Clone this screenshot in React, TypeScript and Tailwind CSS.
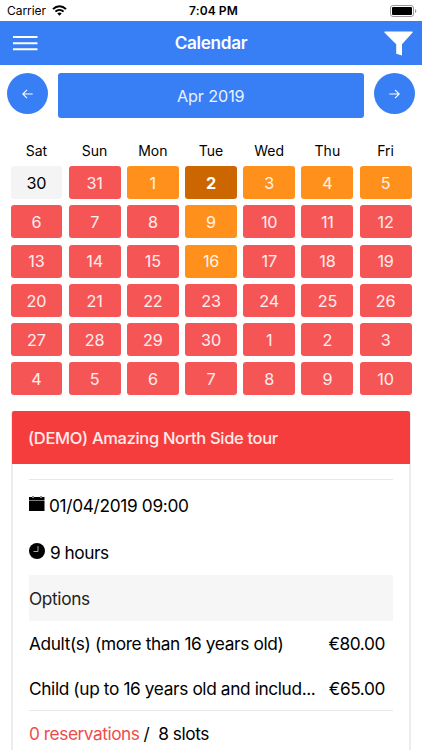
import React from 'react';

const weekdays = ['Sat', 'Sun', 'Mon', 'Tue', 'Wed', 'Thu', 'Fri'];

const days = [
  30, 31, 1, 2, 3, 4, 5,
  6, 7, 8, 9, 10, 11, 12,
  13, 14, 15, 16, 17, 18, 19,
  20, 21, 22, 23, 24, 25, 26,
  27, 28, 29, 30, 1, 2, 3,
  4, 5, 6, 7, 8, 9, 10,
];

const available = [2, 4, 5, 6, 10, 17];

function dayStyle(index: number) {
  if (index === 0) return 'bg-[#f4f4f4] text-black';
  if (index === 3) return 'bg-[#cc6600] text-white font-bold';
  if (available.includes(index)) return 'bg-[#ff901c] text-white/90';
  return 'bg-[#f65556] text-white/90';
}

function StatusBar() {
  return (
    <div className="grid h-[21px] grid-cols-3 items-center bg-white pr-[5px] pl-[7px]">
      <div className="flex items-center gap-[6px]">
        <span className="text-[12px] leading-[21px] tracking-[-0.05px]">Carrier</span>
        <svg width="15" height="11" viewBox="0 0 15 11" fill="none" stroke="black" strokeWidth="2">
          <path d="M1 4.1C4.8.3 10.2.3 14 4.1" />
          <path d="M3.4 6.6C5.8 4.3 9.2 4.3 11.6 6.6" />
          <path d="M7.5 10.7 5.3 8.5C6.6 7.3 8.4 7.3 9.7 8.5Z" fill="black" stroke="none" />
        </svg>
      </div>
      <span className="pl-[3px] text-center text-[12px] leading-[21px] font-semibold whitespace-nowrap tracking-[0.1px]">7:04 PM</span>
      <svg className="justify-self-end" width="27" height="12" viewBox="0 0 27 12">
        <rect x="0.5" y="0.5" width="23" height="11" rx="2.5" fill="white" stroke="#999" />
        <rect x="2" y="2" width="20" height="8" rx="1" fill="black" />
        <path d="M25 4v4q1.3-.7 1.3-2T25 4" fill="#999" />
      </svg>
    </div>
  );
}

function Header() {
  return (
    <header className="flex h-[44px] items-center justify-between bg-[#387ef5] pr-[9px] pl-[13px] text-white">
      <svg width="25" height="15" viewBox="0 0 25 15" fill="white">
        <path d="M0 0h24.5v2H0zM0 6.2h24.5v2H0zM0 12.2h24.5v2H0z" />
      </svg>
      <h1 className="text-[17.2px] font-semibold tracking-[-0.33px]">Calendar</h1>
      <svg width="29" height="25" viewBox="0 0 29 25" fill="white">
        <path d="M1 .5h27q1 0 .6 1L18 13.2V24.5L12.2 22.8V13.2L.4 1.5Q0 .5 1 .5z" />
      </svg>
    </header>
  );
}

function ArrowButton({ forward }: { forward?: boolean }) {
  return (
    <button className="flex h-[41px] w-[41px] items-center justify-center rounded-full bg-[#387ef5]">
      <svg
        className={forward ? 'rotate-180' : ''}
        width="11" height="10" viewBox="0 0 11 10" fill="none" stroke="white" strokeWidth="1.1"
      >
        <path d="M10.7 5H1M5 .8.8 5 5 9.2" />
      </svg>
    </button>
  );
}

function PriceRow({ label, price }: { label: string; price: string }) {
  return (
    <div className="flex h-[45px] items-center justify-between pr-[8px]">
      <span className="whitespace-nowrap tracking-[-0.38px]">{label}</span>
      <span className="tracking-[-0.4px]">{price}</span>
    </div>
  );
}

function TourCard() {
  return (
    <section className="mx-[11px] mt-[16px] h-[400px] rounded-[3px] border-x-2 border-[#ececec] text-[17.3px]">
      <h2 className="-mx-px flex h-[53px] items-center rounded-t-[2px] bg-[#f53d3d] pl-[16px] text-[16.5px] font-medium tracking-[-0.33px] text-white/90">
        (DEMO) Amazing North Side tour
      </h2>
      <div className="mr-[16px] ml-[16px] mt-[15px] border-t border-[#e8e8e8]">
        <div className="flex h-[50px] items-center gap-[4px]">
          <svg className="mb-[3px]" width="16" height="15" viewBox="0 0 16 15">
            <path d="M0 1h15.5v3H0zM0 4.5h15.5V15H0z" fill="black" />
            <path d="M3 0h2v2H3zM11 0h2v2h-2z" fill="#888" />
          </svg>
          <span className="tracking-[-0.33px]">01/04/2019 09:00</span>
        </div>
        <div className="flex h-[45px] items-center gap-[5px]">
          <svg className="mb-[3px]" width="16" height="16" viewBox="0 0 16 16">
            <circle cx="8" cy="8" r="8" fill="black" />
            <path d="M9 3v5.5H4.5" fill="none" stroke="#aaa" strokeWidth="1" />
          </svg>
          <span className="tracking-[-0.5px]">9 hours</span>
        </div>
        <div className="flex h-[46px] items-center bg-[#f6f6f6] tracking-[-0.36px] text-[#222]">Options</div>
        <PriceRow label="Adult(s) (more than 16 years old)" price="€80.00" />
        <PriceRow label="Child (up to 16 years old and includ..." price="€65.00" />
        <div className="-mt-px flex h-[46px] items-center border-t border-[#e8e8e8]">
          <span className="tracking-[-0.46px] text-[#f04b4b]">0 reservations</span>
          <span className="ml-[4px] whitespace-pre tracking-[-0.42px]">{'/  8 slots'}</span>
        </div>
      </div>
    </section>
  );
}

export default function App() {
  return (
    <div className="h-[750px] w-[422px] overflow-hidden bg-white font-['Inter','Liberation_Sans',sans-serif] text-black">
      <StatusBar />
      <Header />
      <div className="flex items-start justify-between pr-[7.5px] pl-[7px] pt-[8px]">
        <ArrowButton />
        <div className="flex h-[45px] w-[306px] items-center justify-center rounded-[3px] bg-[#387ef5] pt-px text-[16.2px] tracking-[-0.1px] text-white/90">
          Apr 2019
        </div>
        <ArrowButton forward />
      </div>
      <div className="mt-[23px] grid grid-cols-7 gap-x-[6.3px] px-[10.5px] text-center text-[14px] leading-[20px]">
        {weekdays.map((d) => (
          <div key={d}>{d}</div>
        ))}
      </div>
      <div className="mt-[5px] grid grid-cols-7 gap-x-[6.3px] gap-y-[6.3px] px-[10.5px] text-[16.2px] tracking-[-0.2px]">
        {days.map((d, i) => (
          <div key={i} className={`flex h-[33px] items-center justify-center rounded-[3px] pt-px ${dayStyle(i)}`}>
            {d}
          </div>
        ))}
      </div>
      <TourCard />
    </div>
  );
}
